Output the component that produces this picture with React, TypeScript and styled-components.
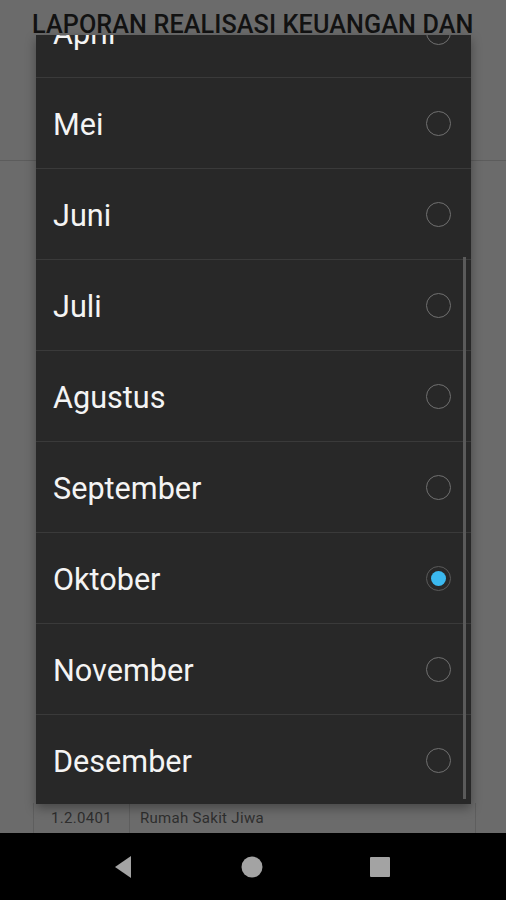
import React, { useLayoutEffect, useRef, useState } from 'react';
import styled, { createGlobalStyle } from 'styled-components';

const GlobalStyle = createGlobalStyle`
	html, body {
		margin: 0;
		padding: 0;
		background: #000;
	}
	* {
		box-sizing: border-box;
	}
`;

const MONTHS = [
	'Januari',
	'Februari',
	'Maret',
	'April',
	'Mei',
	'Juni',
	'Juli',
	'Agustus',
	'September',
	'Oktober',
	'November',
	'Desember',
];

const ROW_HEIGHT = 91;
const LIST_HEIGHT = 769;
const SCROLL_OFFSET = 3 * ROW_HEIGHT + 48;

const Screen = styled.div`
	position: relative;
	width: 506px;
	height: 900px;
	display: flex;
	flex-direction: column;
	overflow: hidden;
	font-family: Roboto, 'Noto Sans', sans-serif;
`;

const Page = styled.div`
	flex: 1;
	display: flex;
	flex-direction: column;
	background: #6b6b6b;
`;

const Header = styled.div`
	height: 161px;
	border-bottom: 1px solid #5c5c5c;
	padding: 10px 0 0 32px;
`;

const Title = styled.h1`
	margin: 0;
	font-size: 25.2px;
	font-weight: 500;
	letter-spacing: 0.1px;
	color: #121212;
	white-space: nowrap;
`;

const TableArea = styled.div`
	flex: 1;
	display: flex;
	flex-direction: column;
	justify-content: flex-end;
	padding: 0 30px 0 33px;
`;

const TableRow = styled.div`
	display: grid;
	grid-template-columns: 95px 1fr;
	height: 30px;
	border-left: 1px solid #5e5e5e;
	border-right: 1px solid #5e5e5e;
`;

const Cell = styled.div<{ $divider?: boolean }>`
	display: flex;
	align-items: center;
	padding-left: ${(p) => (p.$divider ? '10px' : '17px')};
	border-left: ${(p) => (p.$divider ? '1px solid #5e5e5e' : 'none')};
	font-size: 15px;
	letter-spacing: 0.3px;
	color: #2e2e2e;
`;

const NavBar = styled.div`
	height: 67px;
	background: #000;
	display: flex;
	align-items: center;
	justify-content: center;
	gap: 104px;
	padding-right: 2px;
`;

const NavIcon = styled.svg`
	width: 24px;
	height: 24px;
	fill: #a3a3a3;
`;

const Dialog = styled.div`
	position: absolute;
	left: 36px;
	top: 35px;
	width: 435px;
	height: ${LIST_HEIGHT}px;
	background: #282828;
	box-shadow: 0 4px 10px rgba(0, 0, 0, 0.35);
`;

const List = styled.div`
	height: 100%;
	overflow-y: scroll;
	scrollbar-width: none;
	&::-webkit-scrollbar {
		display: none;
	}
`;

const Row = styled.div`
	height: ${ROW_HEIGHT}px;
	display: flex;
	align-items: center;
	justify-content: space-between;
	padding: 0 20px 0 17px;
	border-bottom: 1.5px solid #3a3a3a;
`;

const Label = styled.span`
	font-size: 30.6px;
	color: #f4f4f4;
	padding-top: 2px;
`;

const Radio = styled.span<{ $checked?: boolean }>`
	width: 25px;
	height: 25px;
	border-radius: 50%;
	border: 1.5px solid ${(p) => (p.$checked ? '#5a5a5a' : '#707070')};
	display: flex;
	align-items: center;
	justify-content: center;

	&::after {
		content: '';
		width: 15px;
		height: 15px;
		border-radius: 50%;
		background: #3bb9ef;
		display: ${(p) => (p.$checked ? 'block' : 'none')};
	}
`;

const Thumb = styled.div`
	position: absolute;
	right: 5px;
	width: 3px;
	background: #5a5a5a;
`;

export default function App() {
	const listRef = useRef<HTMLDivElement>(null);
	const [scrollTop, setScrollTop] = useState(SCROLL_OFFSET);
	const contentHeight = MONTHS.length * ROW_HEIGHT;
	const thumbHeight = (LIST_HEIGHT / contentHeight) * LIST_HEIGHT;
	const thumbTop = (scrollTop / contentHeight) * LIST_HEIGHT - 4;

	useLayoutEffect(() => {
		if (listRef.current) listRef.current.scrollTop = SCROLL_OFFSET;
	}, []);

	return (
		<Screen>
			<GlobalStyle />
			<Page>
				<Header>
					<Title>LAPORAN REALISASI KEUANGAN DAN</Title>
				</Header>
				<TableArea>
					<TableRow>
						<Cell>1.2.0401</Cell>
						<Cell $divider>Rumah Sakit Jiwa</Cell>
					</TableRow>
				</TableArea>
			</Page>
			<NavBar>
				<NavIcon viewBox="0 0 24 24">
					<path d="M19 1 L19 23 L3 12 Z" />
				</NavIcon>
				<NavIcon viewBox="0 0 24 24">
					<circle cx="12" cy="12" r="10.5" />
				</NavIcon>
				<NavIcon viewBox="0 0 24 24">
					<rect x="2" y="2" width="20" height="20" rx="1" />
				</NavIcon>
			</NavBar>
			<Dialog>
				<List ref={listRef} onScroll={(e) => setScrollTop(e.currentTarget.scrollTop)}>
					{MONTHS.map((m) => (
						<Row key={m}>
							<Label>{m}</Label>
							<Radio $checked={m === 'Oktober'} />
						</Row>
					))}
				</List>
				<Thumb style={{ top: thumbTop, height: thumbHeight }} />
			</Dialog>
		</Screen>
	);
}
